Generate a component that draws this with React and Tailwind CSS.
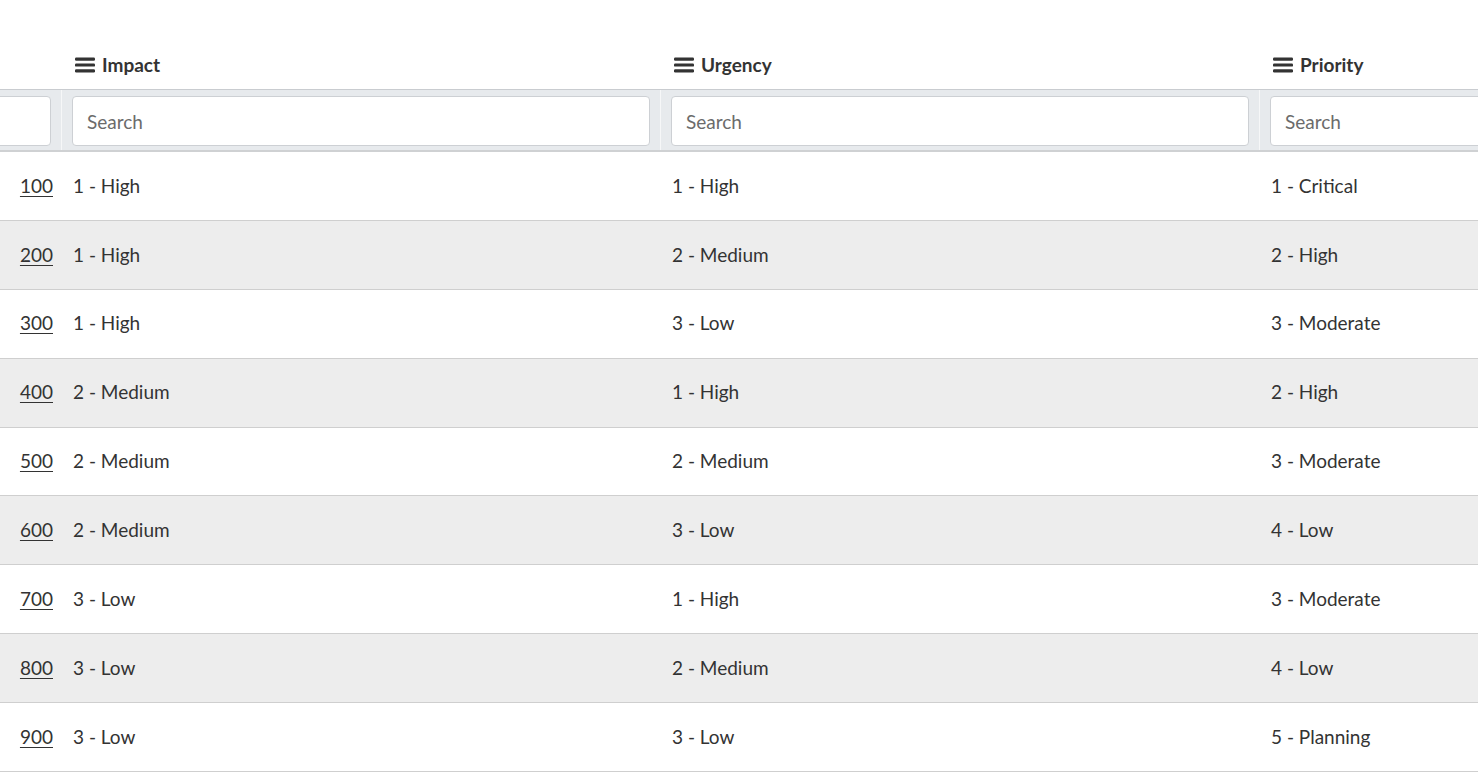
const rows = [
  ['100', '1 - High', '1 - High', '1 - Critical'],
  ['200', '1 - High', '2 - Medium', '2 - High'],
  ['300', '1 - High', '3 - Low', '3 - Moderate'],
  ['400', '2 - Medium', '1 - High', '2 - High'],
  ['500', '2 - Medium', '2 - Medium', '3 - Moderate'],
  ['600', '2 - Medium', '3 - Low', '4 - Low'],
  ['700', '3 - Low', '1 - High', '3 - Moderate'],
  ['800', '3 - Low', '2 - Medium', '4 - Low'],
  ['900', '3 - Low', '3 - Low', '5 - Planning'],
]

const columns = ['Impact', 'Urgency', 'Priority']

const BarsIcon = () => (
  <svg width="20" height="16" viewBox="0 0 20 16" className="shrink-0">
    <rect x="0" y="0.5" width="20" height="3.2" rx="1.2" fill="#333" />
    <rect x="0" y="6.4" width="20" height="3.2" rx="1.2" fill="#333" />
    <rect x="0" y="12.3" width="20" height="3.2" rx="1.2" fill="#333" />
  </svg>
)

const App = () => {
  return (
    <div
      className="w-[1478px] h-[778px] overflow-hidden bg-white text-[#333]"
      style={{ fontFamily: 'Lato, "Open Sans", sans-serif' }}
    >
      <div className="w-[1860px]">
        {/* Header */}
        <div className="flex h-[89px] items-end">
          <div className="w-[62px] shrink-0" />
          {columns.map((c) => (
            <div key={c} className="w-[599px] shrink-0 pl-[13px] pb-[12px] flex items-center gap-[7px]">
              <BarsIcon />
              <span className="text-[19px] font-bold leading-[24px]">{c}</span>
            </div>
          ))}
        </div>

        {/* Filter row */}
        <div className="flex h-[63px] bg-[#e7eaed] border-t border-[#c9ccd0] border-b-[2px] border-b-[#cfd1d3]">
          <div className="w-[62px] shrink-0 border-r border-[#f6f7f8] pt-[6px] pr-[10px]">
            <div className="h-[50px] bg-white border border-[#cdd0d4] rounded-[4px] -ml-[20px]" />
          </div>
          {columns.map((c) => (
            <div key={c} className="w-[599px] shrink-0 border-r border-[#f6f7f8] pt-[6px] px-[10px]">
              <input
                placeholder="Search"
                className="w-full h-[50px] bg-white border border-[#cdd0d4] rounded-[4px] px-[14px] text-[19px] text-[#333] placeholder:text-[#6b6b6b] outline-none"
                style={{ fontFamily: 'Lato, "Open Sans", sans-serif' }}
              />
            </div>
          ))}
        </div>

        {/* Body */}
        {rows.map((r, i) => (
          <div
            key={r[0]}
            className={`flex h-[68.9px] items-center border-b border-[#cfcfcf] text-[19px] ${i % 2 === 1 ? 'bg-[#ededed]' : 'bg-white'}`}
          >
            <div className="w-[62px] shrink-0 flex justify-end pr-[9px]">
              <a href="#" className="underline underline-offset-[3px] text-[#333]">{r[0]}</a>
            </div>
            <div className="w-[599px] shrink-0 pl-[11px]">{r[1]}</div>
            <div className="w-[599px] shrink-0 pl-[11px]">{r[2]}</div>
            <div className="w-[599px] shrink-0 pl-[11px]">{r[3]}</div>
          </div>
        ))}
      </div>
    </div>
  )
}

export default App
